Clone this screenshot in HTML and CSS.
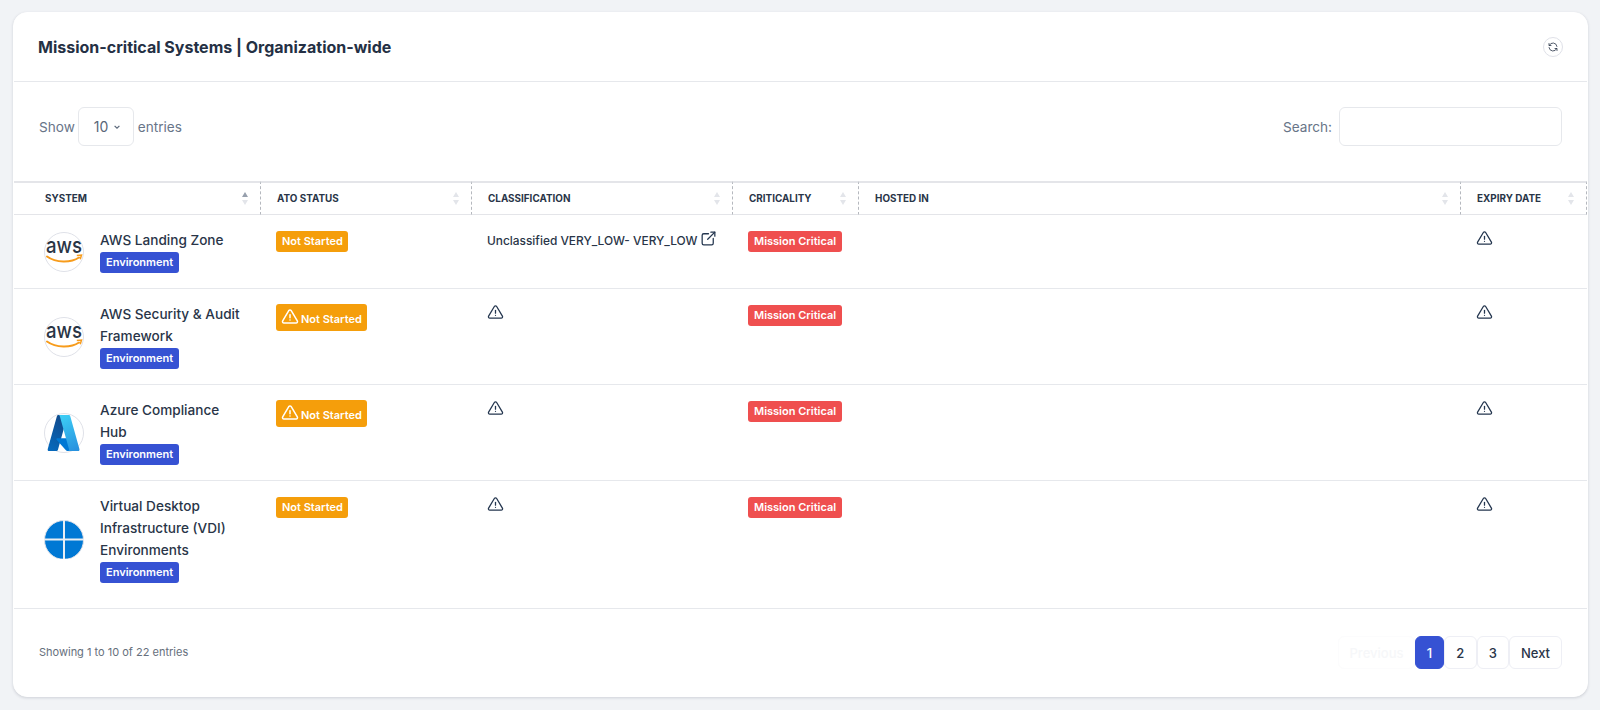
FILE: index.html
```html
<!DOCTYPE html>
<html lang="en">
<head>
    <meta charset="UTF-8">
    <meta name="viewport" content="width=device-width, initial-scale=1.0">
    <title>Mission-critical Systems</title>
    <link rel="stylesheet" href="styles.css">
</head>
<body>
    <svg class="sprites" width="0" height="0" aria-hidden="true">
        <defs>
            <linearGradient id="azA" x1="0.6" y1="0" x2="0.2" y2="1"><stop offset="0" stop-color="#114a8b"/><stop offset="1" stop-color="#0669bc"/></linearGradient>
            <linearGradient id="azC" x1="0.4" y1="0" x2="0.7" y2="1"><stop offset="0" stop-color="#3ccbf4"/><stop offset="1" stop-color="#2892df"/></linearGradient>
            <symbol id="warn" viewBox="0 0 24 24"><path d="M12 9v4"/><path d="M10.363 3.591l-8.106 13.534a1.914 1.914 0 0 0 1.636 2.871h16.214a1.914 1.914 0 0 0 1.636 -2.87l-8.106 -13.536a1.914 1.914 0 0 0 -3.274 0z"/><path d="M12 16h.01"/></symbol>
            <symbol id="aws" viewBox="0 0 40 40">
                <circle cx="20" cy="20" r="19.500" fill="#fff" stroke="#dfe1e8"/>
                <text x="20" y="21" text-anchor="middle" textLength="36" lengthAdjust="spacingAndGlyphs" class="aws-word">aws</text>
                <path d="M3 24.500C12 31 27 31 35 25.500" fill="none" stroke="#f79c1c" stroke-width="2" stroke-linecap="round"/>
                <path d="M32.800 23.500l4.700 -.4l-1.300 4.200" fill="none" stroke="#f79c1c" stroke-width="1.500"/>
            </symbol>
        </defs>
    </svg>

    <div class="card">
        <div class="card-head">
            <h2>Mission-critical Systems | Organization-wide</h2>
            <button class="refresh" aria-label="Refresh">
                <svg viewBox="0 0 24 24" width="12" height="12"><path d="M20 11a8.100 8.100 0 0 0 -15.500 -2m-.5 -4v4h4"/><path d="M4 13a8.100 8.100 0 0 0 15.500 2m.5 4v-4h-4"/></svg>
            </button>
        </div>

        <div class="filters">
            <div class="show">
                <span>Show</span>
                <div class="select">10
                    <svg viewBox="0 0 10 10" width="8" height="8"><path d="M2 3.500l3 3l3 -3"/></svg>
                </div>
                <span>entries</span>
            </div>
            <label class="search">Search: <input type="text"></label>
        </div>

        <table>
            <colgroup>
                <col class="c-system"><col class="c-ato"><col class="c-class"><col class="c-crit"><col class="c-host"><col class="c-exp">
            </colgroup>
            <thead>
                <tr>
                    <th class="first"><div class="th-in">System <span class="sort active"><i></i><b></b></span></div></th>
                    <th><div class="th-in">ATO Status <span class="sort"><i></i><b></b></span></div></th>
                    <th><div class="th-in">Classification <span class="sort"><i></i><b></b></span></div></th>
                    <th><div class="th-in">Criticality <span class="sort"><i></i><b></b></span></div></th>
                    <th><div class="th-in">Hosted In <span class="sort"><i></i><b></b></span></div></th>
                    <th><div class="th-in">Expiry Date <span class="sort"><i></i><b></b></span></div></th>
                </tr>
            </thead>
            <tbody>
                <tr>
                    <td class="first">
                        <div class="sys">
                            <svg class="logo" viewBox="0 0 40 40"><use href="#aws"/></svg>
                            <div class="sys-info"><div class="sys-name">AWS Landing Zone</div><span class="tag tag-env">Environment</span></div>
                        </div>
                    </td>
                    <td><span class="tag tag-amber">Not Started</span></td>
                    <td class="cls">Unclassified VERY_LOW- VERY_LOW <svg class="ext" viewBox="0 0 24 24" width="19" height="19"><path d="M12 6h-6a2 2 0 0 0 -2 2v10a2 2 0 0 0 2 2h10a2 2 0 0 0 2 -2v-6"/><path d="M11 13l9 -9"/><path d="M15 4h5v5"/></svg></td>
                    <td><span class="tag tag-red">Mission Critical</span></td>
                    <td></td>
                    <td><svg class="warn"><use href="#warn"/></svg></td>
                </tr>
                <tr>
                    <td class="first">
                        <div class="sys">
                            <svg class="logo" viewBox="0 0 40 40"><use href="#aws"/></svg>
                            <div class="sys-info"><div class="sys-name">AWS Security &amp; Audit Framework</div><span class="tag tag-env">Environment</span></div>
                        </div>
                    </td>
                    <td><span class="tag tag-amber tag-big"><svg class="warn-w"><use href="#warn"/></svg>Not Started</span></td>
                    <td><svg class="warn"><use href="#warn"/></svg></td>
                    <td><span class="tag tag-red">Mission Critical</span></td>
                    <td></td>
                    <td><svg class="warn"><use href="#warn"/></svg></td>
                </tr>
                <tr>
                    <td class="first">
                        <div class="sys">
                            <svg class="logo" viewBox="0 0 40 40">
                                <circle cx="20" cy="20" r="19.500" fill="#fff" stroke="#dfe1e8"/>
                                <g transform="translate(2.300 -.8) scale(.36 .434)">
                                    <path fill="url(#azA)" d="M33.338 6.544h26.038l-27.030 80.087a4.152 4.152 0 0 1-3.933 2.824H8.149a4.145 4.145 0 0 1-3.928-5.470L29.404 9.368a4.152 4.152 0 0 1 3.934-2.825z"/>
                                    <path fill="#0078d4" d="M71.175 60.261h-41.290a1.911 1.911 0 0 0-1.305 3.309l26.532 24.764a4.171 4.171 0 0 0 2.846 1.121h23.380z"/>
                                    <path fill="url(#azC)" d="M66.595 9.364a4.145 4.145 0 0 0-3.928-2.820H33.648a4.146 4.146 0 0 1 3.928 2.820l25.184 74.620a4.146 4.146 0 0 1-3.928 5.472h29.020a4.146 4.146 0 0 0 3.927-5.472z"/>
                                </g>
                            </svg>
                            <div class="sys-info"><div class="sys-name">Azure Compliance Hub</div><span class="tag tag-env">Environment</span></div>
                        </div>
                    </td>
                    <td><span class="tag tag-amber tag-big"><svg class="warn-w"><use href="#warn"/></svg>Not Started</span></td>
                    <td><svg class="warn"><use href="#warn"/></svg></td>
                    <td><span class="tag tag-red">Mission Critical</span></td>
                    <td></td>
                    <td><svg class="warn"><use href="#warn"/></svg></td>
                </tr>
                <tr class="row-tall">
                    <td class="first">
                        <div class="sys">
                            <svg class="logo" viewBox="0 0 40 40">
                                <circle cx="20" cy="20" r="19.500" fill="#0078d4" stroke="#dfe1e8"/>
                                <path d="M20 0v40M0 19.500h40" stroke="#e8eef4" stroke-width="2"/>
                                <rect y="38.800" width="40" height="1.200" fill="#fff"/>
                            </svg>
                            <div class="sys-info"><div class="sys-name">Virtual Desktop Infrastructure (VDI) Environments</div><span class="tag tag-env">Environment</span></div>
                        </div>
                    </td>
                    <td><span class="tag tag-amber">Not Started</span></td>
                    <td><svg class="warn"><use href="#warn"/></svg></td>
                    <td><span class="tag tag-red">Mission Critical</span></td>
                    <td></td>
                    <td><svg class="warn"><use href="#warn"/></svg></td>
                </tr>
            </tbody>
        </table>

        <div class="foot">
            <div class="info">Showing 1 to 10 of 22 entries</div>
            <div class="pager">
                <a class="prev">Previous</a>
                <a class="on">1</a>
                <a>2</a>
                <a>3</a>
                <a class="next">Next</a>
            </div>
        </div>
    </div>
</body>
</html>
```

FILE: styles.css
```css
* { box-sizing: border-box; }
html, body { height: 100%; }
body { margin: 0; padding: 12px 12px 13px 13px; background: #f1f3f6; font-family: Inter, "Liberation Sans", sans-serif; color: #293548; overflow: hidden; }
.sprites { position: absolute; }

.card { height: 685px; background: #fff; border: 1px solid #fff; border-radius: 14px; box-shadow: 0 1px 3px rgba(30, 40, 60, .16); overflow: hidden; }

.card-head { height: 69px; padding: 0 24px 0 24px; display: flex; align-items: center; justify-content: space-between; border-bottom: 1px solid #e6e8ec; }
.card-head h2 { margin: 0 0 1px; font-size: 16px; font-weight: 700; color: #243044; }
.refresh { width: 20px; height: 20px; padding: 0; display: flex; align-items: center; justify-content: center; background: #fff; border: 1px solid #dfe1e8; border-radius: 50%; }
.refresh svg { fill: none; stroke: #293548; stroke-width: 1.600; stroke-linecap: round; stroke-linejoin: round; }

.filters { height: 99px; padding: 25px 25px 0 25px; display: flex; justify-content: space-between; align-items: flex-start; font-size: 13.600px; color: #687588; }
.show { display: flex; align-items: center; gap: 3px; height: 39px; }
.select { width: 56px; height: 39px; margin-right: 1px; padding-left: 15px; display: flex; align-items: center; gap: 5px; border: 1px solid #e6e8ec; border-radius: 6px; font-size: 14px; color: #5a6779; }
.select svg { fill: none; stroke: #5a6779; stroke-width: 1.500; }
.search { display: flex; align-items: center; gap: 7px; height: 39px; }
.search input { width: 223px; height: 39px; border: 1px solid #e6e8ec; border-radius: 6px; background: #fff; }

table { width: 1573px; table-layout: fixed; border-collapse: separate; border-spacing: 0; }
.c-system { width: 247px; }
.c-ato { width: 211px; }
.c-class { width: 261px; }
.c-crit { width: 126px; }
.c-host { width: 602px; }
.c-exp { width: 126px; }

th { height: 34px; padding: 0 12px 1px 16px; border-top: 2px solid #e4e5e9; border-bottom: 1px solid #e4e5e9; border-right: 1px dashed #b5b8be; font-size: 9.900px; font-weight: 700; text-transform: uppercase; text-align: left; color: #293548; }
th.first { padding-left: 31px; }
.th-in { display: flex; align-items: center; justify-content: space-between; }
.sort { display: flex; flex-direction: column; gap: 3px; }
.sort i, .sort b { display: block; width: 0; height: 0; border-left: 3px solid transparent; border-right: 3px solid transparent; }
.sort i { border-bottom: 5px solid #e3e5ea; }
.sort b { border-top: 5px solid #e3e5ea; }
.sort.active i { border-bottom-color: #97a0ad; }

td { padding: 15px 15px 14px 15px; vertical-align: top; border-bottom: 1px solid #e6e8ec; font-size: 12px; font-weight: 500; }
td.first { padding: 14px 16px 15px 30px; }
.row-tall td.first { padding-bottom: 25px; }
td svg.warn { display: block; width: 17px; height: 17px; fill: none; stroke: #24364f; stroke-width: 1.800; stroke-linecap: round; stroke-linejoin: round; }
td.cls { padding-top: 14px; font-size: 11.900px; white-space: nowrap; }
.ext { margin-left: -2px; fill: none; stroke: #24364f; stroke-width: 1.600; stroke-linecap: round; stroke-linejoin: round; vertical-align: -3px; }

.sys { display: flex; align-items: center; gap: 16px; }
.logo { flex: none; width: 40px; height: 40px; margin-top: 2px; }
.aws-word { font-family: Inter, sans-serif; font-size: 22px; font-weight: 500; fill: #2a3545; }
.sys-name { font-size: 13.600px; font-weight: 500; line-height: 22px; margin-bottom: 1px; color: #293548; }
.sys-info { min-width: 0; }

.tag { display: inline-flex; align-items: center; height: 21px; padding: 0 6px 1px; border-radius: 3px; font-size: 11px; font-weight: 600; color: #fff; white-space: nowrap; }
td > .tag { margin-top: 1px; }
.tag-env { background: #3652d3; }
.tag-amber { background: #f59e0b; padding-right: 5px; }
.tag-red { background: #ef4f4f; }
td > .tag-big { height: 27px; margin-top: 0; padding-top: 2px; padding-bottom: 0; }
.warn-w { width: 18px; height: 18px; margin: -4px 2px 0 -1px; fill: none; stroke: #fff; stroke-width: 2; stroke-linecap: round; stroke-linejoin: round; }

.foot { height: 87px; padding: 27px 25px 0 25px; display: flex; justify-content: space-between; align-items: flex-start; }
.info { font-size: 11px; color: #666f7c; line-height: 32px; }
.pager { display: flex; height: 33px; font-size: 13px; font-weight: 500; }
.pager a { display: flex; align-items: center; justify-content: center; width: 32.500px; border: 1px solid #eeeff5; border-radius: 6px; color: #293548; }
.pager .prev { width: 77px; color: #f6f7f9; border-color: #fcfcfd; }
.pager .on { width: 29px; background: #3652d3; border-color: #3652d3; color: #fff; }
.pager .next { width: 53px; }
```
